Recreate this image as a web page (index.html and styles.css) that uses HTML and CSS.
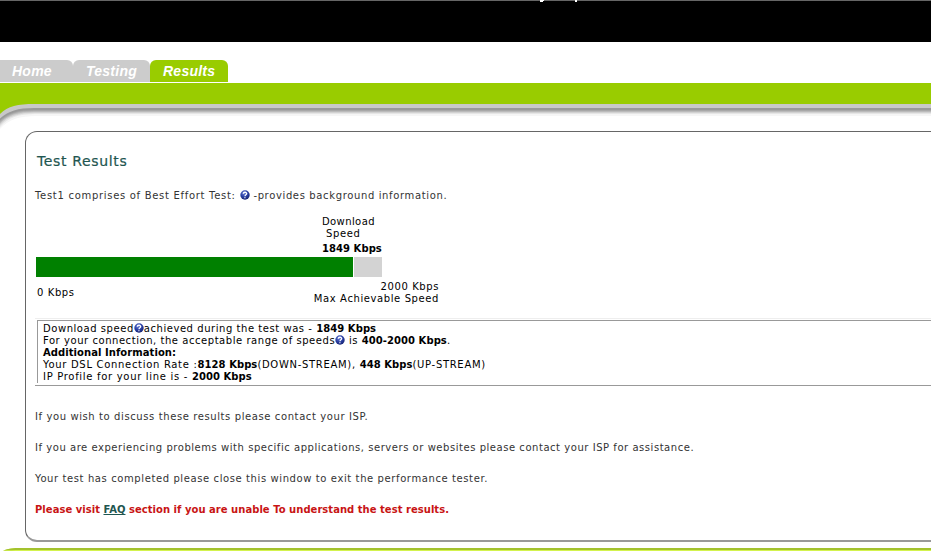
FILE: index.html
```
<!DOCTYPE html>
<html lang="en">
<head>
    <meta charset="UTF-8">
    <title>Test Results</title>
    <link rel="stylesheet" href="styles.css">
</head>
<body>
    <svg class="symbols" width="0" height="0">
        <defs>
            <radialGradient id="ball" cx="0.4" cy="0.3" r="0.75">
                <stop offset="0" stop-color="#6f83d6"/>
                <stop offset="0.5" stop-color="#2b41a6"/>
                <stop offset="1" stop-color="#14206e"/>
            </radialGradient>
            <symbol id="help" viewBox="0 0 10 10">
                <circle cx="5" cy="5" r="4.7" fill="url(#ball)"/>
                <path d="M3.2 3.7C3.4 1.7 6.9 1.8 6.7 3.8C6.6 4.9 5.1 4.8 5 6.2M4.9 7.2V8.3" fill="none" stroke="#fff" stroke-width="1.3"/>
            </symbol>
        </defs>
    </svg>

    <div class="header">
        <svg width="931" height="42" viewBox="0 0 931 42">
            <path d="M540 0h4v1h-1v1h-3zM575 0h2v2h-2z" fill="#fff"/>
        </svg>
    </div>

    <div class="tabs">
        <div class="tab tab-home">Home</div>
        <div class="tab tab-testing">Testing</div>
        <div class="tab tab-results">Results</div>
    </div>

    <!-- green band with the curved shadow -->
    <svg class="band" width="931" height="49" viewBox="0 0 931 49">
        <path d="M0 1H931V34H36C20 34 9 37 0 47Z" fill="#f6f6f6"/>
        <path d="M0 1H931V32H35C19 32 9 35 0 45Z" fill="#e6e6e6"/>
        <path d="M0 1H931V31H35C19 31 8 34 0 43Z" fill="#d2d2d2"/>
        <path d="M0 1H931V30H34C18 30 8 33 0 41.5Z" fill="#bbb"/>
        <path d="M0 1H931V29H34C18 29 8 32 0 40Z" fill="#a8a8a8"/>
        <path d="M0 1H931V28H34C18 28 8 31 0 38.5Z" fill="#999"/>
        <path d="M0 1H931V26H34C18 26 8 29 0 36.5Z" fill="#c8c8c8"/>
        <path d="M0 1H931V22H34C18 22 8 24 0 32Z" fill="#9c0"/>
    </svg>

    <div class="panel">
        <h1>Test Results</h1>
        <p class="intro"><span class="wide">Test1 comprises of Best Effort Test: </span><svg class="help"><use href="#help"/></svg> -provides background information.</p>

        <div class="chart">
            <div class="speed">
                <div class="tight">Download</div>
                <div class="indent">Speed</div>
                <b>1849 Kbps</b>
            </div>
            <div class="bar"><div class="fill"></div></div>
            <div class="scale">
                <span class="min">0 Kbps</span>
                <span class="max">2000 Kbps<br>Max Achievable Speed</span>
            </div>
        </div>

        <div class="info">
            <div class="inner">
                <div class="l1">Download speed<svg class="help"><use href="#help"/></svg>achieved during the test was - <b>1849 Kbps</b></div>
                <div class="l2">For your connection, the acceptable range of speeds<svg class="help"><use href="#help"/></svg> is <b>400-2000 Kbps</b>.</div>
                <div class="l3"><b>Additional Information:</b></div>
                <div class="l4">Your DSL Connection Rate :<b>8128 Kbps</b>(DOWN-STREAM), <b>448 Kbps</b>(UP-STREAM)</div>
                <div class="l5">IP Profile for your line is - <b>2000 Kbps</b></div>
            </div>
        </div>

        <p class="p1">If you wish to discuss these results please contact your ISP.</p>
        <p class="p2">If you are experiencing problems with specific applications, servers or websites please contact your ISP for assistance.</p>
        <p class="p3">Your test has completed please close this window to exit the performance tester.</p>
        <p class="faq">Please visit <a href="#">FAQ</a> section if you are unable To understand the test results.</p>
    </div>

    <svg class="footer" width="931" height="4" viewBox="0 0 931 4">
        <path d="M3 4C7 2 11 1 20 1H931V4Z" fill="#d3f34e"/>
        <path d="M3 3.5C8 1.5 14 1 20 1H931V3H20C14 3 9 3.2 3 3.5Z" fill="#a3c22e"/>
    </svg>
</body>
</html>
```
FILE: styles.css
```
* {
    box-sizing: border-box;
}
body {
    margin: 0;
    width: 931px;
    height: 551px;
    overflow: hidden;
    background: #fff;
    font-family: Verdana, "DejaVu Sans", sans-serif;
    font-size: 10px;
    line-height: 12px;
    letter-spacing: 0.6px;
    color: #333;
    white-space: nowrap;
}
svg {
    display: block;
}
b {
    letter-spacing: 0.06px;
}
.symbols {
    position: absolute;
}
.header {
    height: 42px;
    background: #000;
    border-top: 1px solid #666;
}
.header svg {
    margin-top: -1px;
}
.tabs {
    display: flex;
    margin-top: 18px;
    height: 22px;
    font: italic bold 14px/22px Arial, "Liberation Sans", sans-serif;
    letter-spacing: 0.25px;
    color: #fff;
}
.tab {
    background: #ccc;
    border-radius: 6px 6px 0 0;
}
.tab-home {
    width: 73px;
    padding-left: 12px;
    border-top-left-radius: 0;
}
.tab-testing {
    width: 77px;
    padding-left: 13px;
}
.tab-results {
    width: 78px;
    padding-left: 13px;
    background: #9c0;
}
.panel {
    margin: 0 0 0 25px;
    width: 930px;
    height: 411px;
    border: 1px solid #666;
    border-bottom: 2px solid #999;
    border-radius: 12px;
    padding: 21px 0 0 9px;
}
h1 {
    margin: 0 0 0 2px;
    font-size: 14px;
    line-height: 16px;
    font-weight: normal;
    letter-spacing: 0.65px;
    color: #1f5650;
    -webkit-text-stroke: 0.2px #1f5650;
}
p {
    margin: 0 0 19px;
}
p.intro {
    margin: 21px 0 14px;
    letter-spacing: 0.64px;
}
.wide {
    letter-spacing: 0.7px;
}
.help {
    display: inline-block;
    width: 10px;
    height: 10px;
    vertical-align: -1px;
}
.chart {
    color: #000;
    width: 405px;
    padding-left: 1px;
}
.speed {
    padding-left: 286px;
}
.speed b {
    display: block;
    line-height: 17px;
}
.tight {
    letter-spacing: 0.4px;
}
.indent {
    padding-left: 4px;
}
.bar {
    width: 346px;
    height: 20px;
    background: #d3d3d3;
}
.fill {
    width: 318px;
    height: 20px;
    background: #008000;
    border-right: 1px solid #fff;
}
.scale {
    display: flex;
    justify-content: space-between;
    padding: 4px 1px 0 1px;
}
.min {
    padding-top: 6px;
}
.max {
    text-align: right;
}
.info {
    margin: 13px 0 25px;
    height: 68px;
    border-top: 1px solid #eee;
    border-bottom: 1px solid #999;
}
.inner {
    margin: 1px 0 0 2px;
    height: 63px;
    border: 1px solid #999;
    border-bottom: 0;
    padding: 2px 0 0 5px;
    color: #000;
}
.l1,
.l2 {
    letter-spacing: 0.55px;
}
.l4,
.l5 {
    letter-spacing: 0.69px;
}
.p2 {
    letter-spacing: 0.54px;
}
.faq {
    font-weight: bold;
    letter-spacing: 0.03px;
    color: #c81414;
}
.faq a {
    color: #1f5650;
}
.footer {
    margin-top: 5px;
}
```
